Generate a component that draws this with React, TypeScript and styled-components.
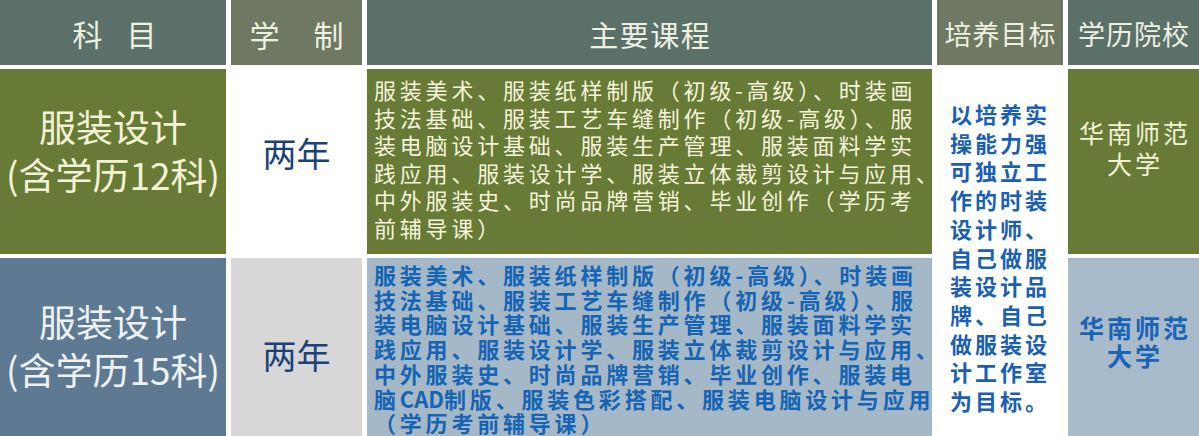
import React from 'react'
import styled, { createGlobalStyle } from 'styled-components'

const GlobalStyle = createGlobalStyle`
  html, body {
    margin: 0;
    padding: 0;
    background: #ffffff;
  }
  body {
    font-family: "Noto Sans CJK SC", "Noto Sans", sans-serif;
  }
`

const Table = styled.div`
  display: grid;
  grid-template-columns: 226px 131px 565px 126px 131px;
  grid-template-rows: 65px 185px 178px;
  column-gap: 5px;
  row-gap: 4px;
  width: 1199px;
  height: 436px;
  overflow: hidden;
  background: #ffffff;
`

const HeaderCell = styled.div<{ $tone: 'teal' | 'olive'; $size: number; $tracking: number }>`
  display: flex;
  align-items: center;
  justify-content: center;
  padding: 2px 0 0 ${(p) => p.$tracking}px;
  background: ${(p) => (p.$tone === 'teal' ? '#5a7069' : '#6e7862')};
  color: #eef0e2;
  font-size: ${(p) => p.$size}px;
  letter-spacing: ${(p) => p.$tracking}px;
  white-space: nowrap;
`

// lift > 0 moves the content up, lift < 0 moves it down
const Cell = styled.div<{ $bg: string; $lift?: number }>`
  display: flex;
  flex-direction: column;
  align-items: center;
  justify-content: center;
  background: ${(p) => p.$bg};
  padding-bottom: ${(p) => Math.max(0, (p.$lift ?? 0) * 2)}px;
  padding-top: ${(p) => Math.max(0, -(p.$lift ?? 0) * 2)}px;
  box-sizing: border-box;
`

const SubjectText = styled.div<{ $color: string }>`
  color: ${(p) => p.$color};
  font-size: 37px;
  line-height: 48px;
  text-align: center;
  white-space: nowrap;
`

const DurationText = styled.div`
  color: #1b4178;
  font-size: 34px;
  line-height: 40px;
`

const CourseCell = styled.div<{ $bg: string; $color: string; $bold?: boolean; $lh: number; $top: number }>`
  background: ${(p) => p.$bg};
  color: ${(p) => p.$color};
  font-size: 22px;
  font-weight: ${(p) => (p.$bold ? 700 : 400)};
  letter-spacing: 3.8px;
  line-height: ${(p) => p.$lh}px;
  padding: ${(p) => p.$top}px 0 0 7px;
  box-sizing: border-box;
`

const Line = styled.div`
  white-space: nowrap;
`

const Latin = styled.span`
  letter-spacing: 0;
`

const GoalCell = styled.div`
  grid-row: 2 / span 2;
  grid-column: 4;
  color: #1a5fb0;
  font-size: 22px;
  font-weight: 700;
  letter-spacing: 3px;
  line-height: 28.7px;
  padding: 30px 0 0 13px;
  box-sizing: border-box;
`

const SchoolText = styled.div<{ $color: string; $bold?: boolean; $lh: number }>`
  color: ${(p) => p.$color};
  font-size: 25px;
  font-weight: ${(p) => (p.$bold ? 700 : 400)};
  letter-spacing: 3px;
  padding-left: 3px;
  line-height: ${(p) => p.$lh}px;
  text-align: center;
  white-space: nowrap;
`

const coursesA = [
  '服装美术、服装纸样制版（初级-高级）、时装画',
  '技法基础、服装工艺车缝制作（初级-高级）、服',
  '装电脑设计基础、服装生产管理、服装面料学实',
  '践应用、服装设计学、服装立体裁剪设计与应用、',
  '中外服装史、时尚品牌营销、毕业创作（学历考',
  '前辅导课）',
]

const coursesB = [
  '服装美术、服装纸样制版（初级-高级）、时装画',
  '技法基础、服装工艺车缝制作（初级-高级）、服',
  '装电脑设计基础、服装生产管理、服装面料学实',
  '践应用、服装设计学、服装立体裁剪设计与应用、',
  '中外服装史、时尚品牌营销、毕业创作、服装电',
]

const goal = [
  '以培养实',
  '操能力强',
  '可独立工',
  '作的时装',
  '设计师、',
  '自己做服',
  '装设计品',
  '牌、自己',
  '做服装设',
  '计工作室',
  '为目标。',
]

export default function App() {
  return (
    <>
      <GlobalStyle />
      <Table>
        <HeaderCell $tone="teal" $size={30} $tracking={-3}>
          科　目
        </HeaderCell>
        <HeaderCell $tone="olive" $size={30} $tracking={2}>
          学　制
        </HeaderCell>
        <HeaderCell $tone="teal" $size={29} $tracking={1.5}>
          主要课程
        </HeaderCell>
        <HeaderCell $tone="olive" $size={27} $tracking={1}>
          培养目标
        </HeaderCell>
        <HeaderCell $tone="teal" $size={27} $tracking={1}>
          学历院校
        </HeaderCell>

        <Cell $bg="#677b36" $lift={12}>
          <SubjectText $color="#f4f2d6">服装设计</SubjectText>
          <SubjectText $color="#f4f2d6">(含学历12科)</SubjectText>
        </Cell>
        <Cell $bg="#ffffff" $lift={9}>
          <DurationText>两年</DurationText>
        </Cell>
        <CourseCell $bg="#677b36" $color="#f6f4dc" $lh={27.5} $top={7}>
          {coursesA.map((l) => (
            <Line key={l}>{l}</Line>
          ))}
        </CourseCell>
        <GoalCell>
          {goal.map((l) => (
            <Line key={l}>{l}</Line>
          ))}
        </GoalCell>
        <Cell $bg="#677b36" $lift={14}>
          <SchoolText $color="#f4f2d6" $lh={31}>
            华南师范
          </SchoolText>
          <SchoolText $color="#f4f2d6" $lh={31}>
            大学
          </SchoolText>
        </Cell>

        <Cell $bg="#5d7a92" $lift={2}>
          <SubjectText $color="#eef2f4">服装设计</SubjectText>
          <SubjectText $color="#eef2f4">(含学历15科)</SubjectText>
        </Cell>
        <Cell $bg="#d7d7d7" $lift={-8}>
          <DurationText>两年</DurationText>
        </Cell>
        <CourseCell $bg="#a5b8c7" $color="#1664b4" $bold $lh={24.7} $top={4}>
          {coursesB.map((l) => (
            <Line key={l}>{l}</Line>
          ))}
          <Line>
            脑<Latin>CAD</Latin>制版、服装色彩搭配、服装电脑设计与应用
          </Line>
          <Line>（学历考前辅导课）</Line>
        </CourseCell>
        <Cell $bg="#a8bbcb" $lift={6}>
          <SchoolText $color="#1a63b5" $bold $lh={28}>
            华南师范
          </SchoolText>
          <SchoolText $color="#1a63b5" $bold $lh={28}>
            大学
          </SchoolText>
        </Cell>
      </Table>
    </>
  )
}
